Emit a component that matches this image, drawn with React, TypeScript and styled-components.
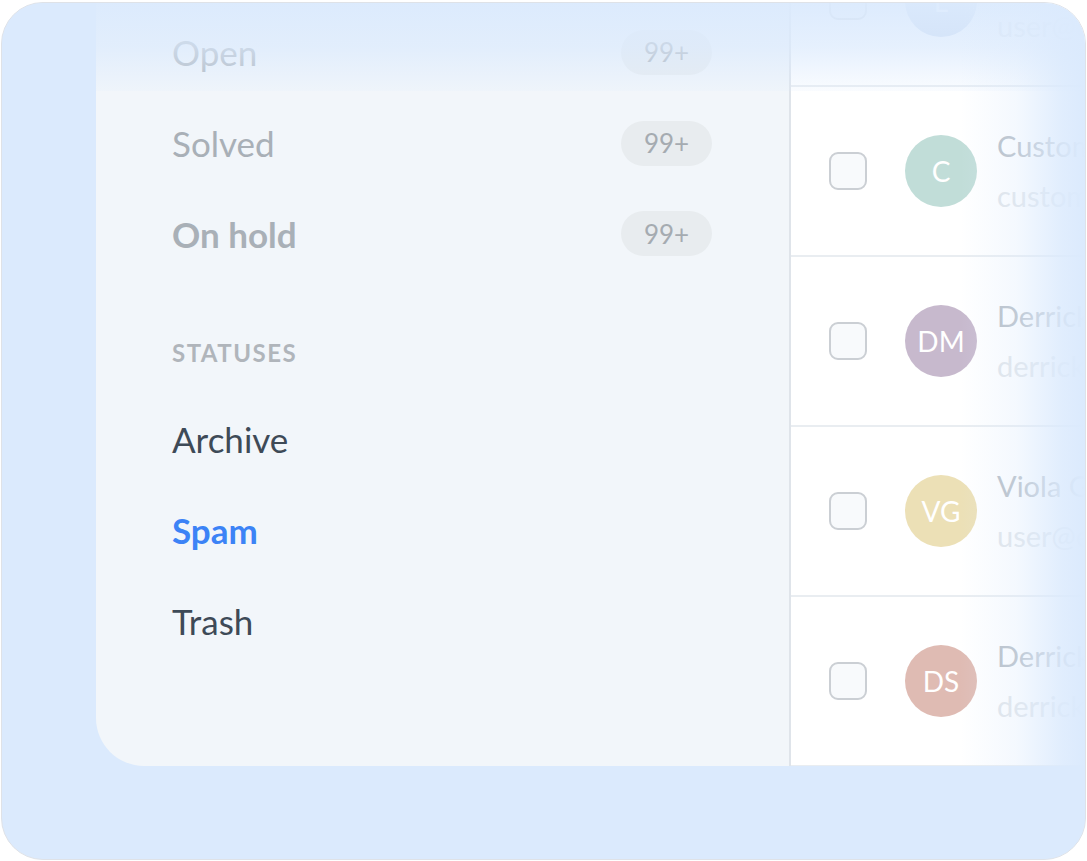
import React from "react"
import styled, { createGlobalStyle } from "styled-components"

const GlobalStyle = createGlobalStyle`
  html, body {
    margin: 0;
    padding: 0;
    background: #ffffff;
  }
  * {
    box-sizing: border-box;
  }
`

const BLUE_BG = "219, 234, 253"

const Frame = styled.div`
  position: relative;
  margin: 2px 1px 0 1px;
  width: 1085px;
  height: 858px;
  border: 1.5px solid #dfe2e7;
  border-radius: 42px;
  background: rgb(${BLUE_BG});
  overflow: hidden;
  font-family: Lato, "Liberation Sans", sans-serif;
`

const Panel = styled.div`
  display: flex;
  margin: -86px 0 0 94px;
  width: 1040px;
  height: 849px;
  border-bottom-left-radius: 48px;
  overflow: hidden;
`

const Sidebar = styled.aside`
  width: 695px;
  flex-shrink: 0;
  background: #f2f6fa;
  border-right: 2px solid #dfe4ea;
  padding: 90px 77px 0 76px;
  display: flex;
  flex-direction: column;
`

const NavItem = styled.div<{ tone: "muted" | "dark" | "active"; bold?: boolean }>`
  height: 90.7px;
  display: flex;
  align-items: center;
  justify-content: space-between;
  font-size: 35px;
  font-weight: ${({ bold, tone }) => (bold || tone === "active" ? 700 : 400)};
  color: ${({ tone }) =>
    tone === "active" ? "#3c83f6" : tone === "dark" ? "#3e4a57" : "#a9b0b7"};
`

const Badge = styled.span`
  width: 91px;
  height: 45px;
  border-radius: 23px;
  background: #e8ecef;
  color: #a5abb1;
  font-size: 26px;
  font-weight: 400;
  display: flex;
  align-items: center;
  justify-content: center;
`

const SectionTitle = styled.div`
  margin-top: 53px;
  height: 40px;
  margin-bottom: 22px;
  display: flex;
  align-items: center;
  font-size: 24px;
  font-weight: 700;
  letter-spacing: 1.5px;
  color: #b0b5bb;
`

const List = styled.div`
  flex: 1;
  background: #ffffff;
  display: flex;
  flex-direction: column;
`

const Row = styled.div`
  height: 170px;
  flex-shrink: 0;
  display: flex;
  align-items: center;
  padding-left: 38px;
  border-bottom: 2px solid #e9edf1;
`

const Checkbox = styled.div`
  width: 38px;
  height: 38px;
  border: 2px solid #cbcfd4;
  border-radius: 9px;
  background: #f8fafc;
  flex-shrink: 0;
`

const Avatar = styled.div<{ color: string }>`
  width: 72px;
  height: 72px;
  border-radius: 50%;
  margin-left: 38px;
  flex-shrink: 0;
  background: ${({ color }) => color};
  color: #ffffff;
  font-size: 28px;
  display: flex;
  align-items: center;
  justify-content: center;
`

const Info = styled.div`
  margin-left: 20px;
  display: flex;
  flex-direction: column;
  white-space: nowrap;
`

const Name = styled.div`
  font-size: 29px;
  line-height: 38px;
  color: #b5bcc4;
`

const Email = styled.div`
  font-size: 29px;
  line-height: 38px;
  margin-top: 12px;
  color: #e1e5e9;
`

const TopFade = styled.div`
  position: absolute;
  left: 0;
  top: 0;
  right: 0;
  height: 88px;
  background: linear-gradient(
    to bottom,
    rgba(${BLUE_BG}, 0.95) 0%,
    rgba(${BLUE_BG}, 0.7) 50%,
    rgba(${BLUE_BG}, 0.15) 100%
  );
  pointer-events: none;
`

const RightFade = styled.div`
  position: absolute;
  top: 0;
  right: 0;
  bottom: 0;
  width: 125px;
  background: linear-gradient(
    to right,
    rgba(${BLUE_BG}, 0) 0%,
    rgba(${BLUE_BG}, 0.3) 45%,
    rgba(${BLUE_BG}, 0.85) 82%,
    rgba(${BLUE_BG}, 1) 100%
  );
  pointer-events: none;
`

const counts = [
  { label: "Open", bold: false },
  { label: "Solved", bold: false },
  { label: "On hold", bold: true },
]

const statuses: { label: string; tone: "dark" | "active" }[] = [
  { label: "Archive", tone: "dark" },
  { label: "Spam", tone: "active" },
  { label: "Trash", tone: "dark" },
]

const contacts = [
  { initials: "L", color: "#c4d4ec", name: "Lucy Brown", email: "user@example.com" },
  { initials: "C", color: "#c1ddd8", name: "Customer Support", email: "customer@example.com" },
  { initials: "DM", color: "#c7b9cd", name: "Derrick Miles", email: "derrick@example.com" },
  { initials: "VG", color: "#ece0b6", name: "Viola Green", email: "user@example.com" },
  { initials: "DS", color: "#dfbbb3", name: "Derrick Stone", email: "derrick@example.com" },
]

const App: React.FC = () => (
  <>
    <GlobalStyle />
    <Frame>
      <Panel>
        <Sidebar>
          {counts.map((c) => (
            <NavItem key={c.label} tone="muted" bold={c.bold}>
              {c.label}
              <Badge>99+</Badge>
            </NavItem>
          ))}
          <SectionTitle>STATUSES</SectionTitle>
          {statuses.map((s) => (
            <NavItem key={s.label} tone={s.tone}>
              {s.label}
            </NavItem>
          ))}
        </Sidebar>

        <List>
          {contacts.map((c) => (
            <Row key={c.initials}>
              <Checkbox />
              <Avatar color={c.color}>{c.initials}</Avatar>
              <Info>
                <Name>{c.name}</Name>
                <Email>{c.email}</Email>
              </Info>
            </Row>
          ))}
        </List>
      </Panel>
      <TopFade />
      <RightFade />
    </Frame>
  </>
)

export default App
